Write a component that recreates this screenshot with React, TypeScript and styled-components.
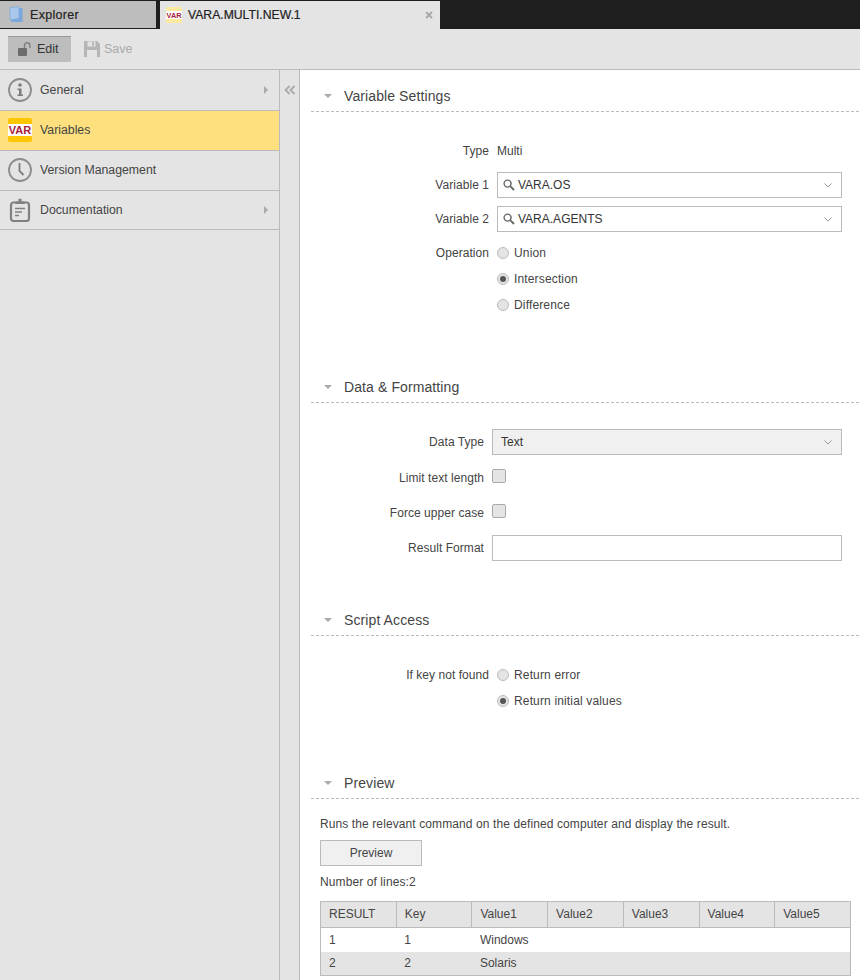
import React from "react";
import styled, { createGlobalStyle } from "styled-components";

const GlobalStyle = createGlobalStyle`
  html, body { margin: 0; padding: 0; height: 100%; background: #fff; }
  body { font-family: "Liberation Sans", Arial, sans-serif; font-size: 12px; color: #333; overflow: hidden; }
  #root { height: 100%; }
`;

const Page = styled.div`
  display: flex;
  flex-direction: column;
  height: 980px;
  width: 860px;
`;

const TabBar = styled.div`
  display: flex;
  flex: none;
  height: 29px;
  padding-top: 1px;
  box-sizing: border-box;
  background: #1e1e1e;
`;

const Tab = styled.div<{ $active?: boolean }>`
  display: flex;
  align-items: center;
  box-sizing: border-box;
  width: ${(p) => (p.$active ? "280px" : "156px")};
  height: ${(p) => (p.$active ? "28px" : "27px")};
  margin-left: ${(p) => (p.$active ? "4px" : "0")};
  padding-left: ${(p) => (p.$active ? "6px" : "9px")};
  gap: 6px;
  background: ${(p) => (p.$active ? "#e4e4e4" : "#bdbdbd")};
  color: #222;
  font-size: ${(p) => (p.$active ? "12.2px" : "12.5px")};
  letter-spacing: ${(p) => (p.$active ? "0" : "0.3px")};
  -webkit-text-stroke: 0.2px #222;
`;

const CloseMark = styled.svg`
  margin-left: auto;
  margin-right: 7px;
`;

const Toolbar = styled.div`
  display: flex;
  flex: none;
  align-items: center;
  gap: 4px;
  box-sizing: border-box;
  height: 41px;
  padding: 0 8px 1px;
  background: #e4e4e4;
  border-bottom: 1px solid #bbb;
`;

const ToolButton = styled.div<{ $pressed?: boolean }>`
  display: flex;
  align-items: center;
  box-sizing: border-box;
  gap: 4px;
  height: 26px;
  width: 63px;
  padding-left: 9px;
  background: ${(p) => (p.$pressed ? "#bdbdbd" : "transparent")};
  border-top: 1px solid ${(p) => (p.$pressed ? "#999" : "transparent")};
  color: ${(p) => (p.$pressed ? "#333" : "#aaa")};
  font-size: 12.5px;
`;

const Workspace = styled.div`
  display: flex;
  flex: 1;
  min-height: 0;
`;

const Sidebar = styled.nav`
  flex: none;
  width: 280px;
  box-sizing: border-box;
  background: #e4e4e4;
  border-right: 1px solid #bbb;
`;

const NavRow = styled.div<{ $active?: boolean; $h?: number }>`
  display: flex;
  align-items: center;
  box-sizing: border-box;
  height: ${(p) => p.$h ?? 40}px;
  padding: 0 11px ${(p) => (p.$h ? "0" : "1px")} 8px;
  gap: 8px;
  background: ${(p) => (p.$active ? "#fee17e" : "transparent")};
  border-bottom: 1px solid #bbb;
  color: #444;
  font-size: 12.3px;
`;

const NavArrow = styled.span`
  margin-left: auto;
  width: 0;
  height: 0;
  border-left: 4px solid #aaa;
  border-top: 4px solid transparent;
  border-bottom: 4px solid transparent;
`;

const Strip = styled.div`
  flex: none;
  width: 20px;
  box-sizing: border-box;
  padding: 14px 0 0 4px;
  background: #e4e4e4;
  border-right: 1px solid #bbb;
`;

const Main = styled.main`
  flex: 1;
  min-width: 0;
  padding-left: 11px;
  background: #fff;
`;

const Section = styled.section<{ $after: number }>`
  margin-bottom: ${(p) => p.$after}px;
`;

const SectionHead = styled.div`
  display: flex;
  align-items: center;
  box-sizing: border-box;
  height: 42px;
  padding: 11px 0 0 13px;
  gap: 12px;
  margin-right: 1px;
  border-bottom: 1px dashed #bbb;
`;

const Caret = styled.span`
  width: 0;
  height: 0;
  border-top: 4px solid #aaa;
  border-left: 4px solid transparent;
  border-right: 4px solid transparent;
`;

const SectionTitle = styled.h2`
  margin: 0;
  font-size: 14px;
  font-weight: normal;
  letter-spacing: 0.1px;
  color: #444;
`;

const FormBody = styled.div<{ $gap: number }>`
  display: flex;
  flex-direction: column;
  gap: ${(p) => p.$gap}px;
  padding: 26px 18px 0 0;
`;

const Row = styled.div`
  display: flex;
  align-items: center;
  height: 26px;
  gap: 8px;
`;

const LastRow = styled(Row)`
  margin-top: 1px;
`;

const Label = styled.div<{ $w: number }>`
  flex: none;
  width: ${(p) => p.$w}px;
  text-align: right;
  font-size: 12px;
  color: #444;
  letter-spacing: 0.05px;
`;

const CheckLabel = styled(Label)`
  margin-top: 2px;
`;

const StaticValue = styled.div`
  color: #444;
  font-size: 12px;
`;

const Field = styled.div<{ $filled?: boolean }>`
  display: flex;
  flex: 1;
  align-items: center;
  box-sizing: border-box;
  height: 26px;
  padding: 0 9px 0 ${(p) => (p.$filled ? "8px" : "5px")};
  gap: 3px;
  background: ${(p) => (p.$filled ? "#f0f0f0" : "#fff")};
  border: 1px solid #bbb;
  color: #333;
  font-size: 12px;
`;

const FieldChevron = styled.svg`
  margin-left: auto;
`;

const RadioIndent = styled.div`
  display: flex;
  flex-direction: column;
  padding-left: 186px;
`;

const RadioLine = styled.div`
  display: flex;
  align-items: center;
  height: 26px;
  gap: 5px;
  color: #444;
  font-size: 12px;
  letter-spacing: 0.15px;
`;

const RadioDot = styled.span<{ $on?: boolean }>`
  display: flex;
  align-items: center;
  justify-content: center;
  box-sizing: border-box;
  width: 12px;
  height: 12px;
  border-radius: 50%;
  border: 1px solid #bbb;
  background: #e4e4e4;

  &::after {
    content: "";
    display: ${(p) => (p.$on ? "block" : "none")};
    width: 6px;
    height: 6px;
    border-radius: 50%;
    background: #555;
  }
`;

const CheckBox = styled.span`
  box-sizing: border-box;
  width: 14px;
  height: 14px;
  margin-top: -2px;
  border-radius: 2px;
  border: 1px solid #aaa;
  background: #e4e4e4;
`;

const PreviewBody = styled.div`
  padding: 18px 8px 0 9px;
`;

const Hint = styled.p`
  margin: 0 0 9px;
  line-height: 14px;
  font-size: 12px;
  letter-spacing: 0.1px;
  color: #444;
`;

const PreviewButton = styled.button`
  display: block;
  width: 102px;
  height: 26px;
  padding: 0;
  background: #f0f0f0;
  border: 1px solid #bbb;
  color: #444;
  font: 12px "Liberation Sans", Arial, sans-serif;
`;

const LineCount = styled(Hint)`
  margin: 9px 0 12px;
`;

const ResultTable = styled.table`
  width: 531px;
  table-layout: fixed;
  border-collapse: collapse;
  border: 1px solid #bbb;
  font-size: 12px;
  color: #444;
`;

const HeadCell = styled.th`
  height: 26px;
  padding: 0 0 2px 8px;
  box-sizing: border-box;
  background: #e4e4e4;
  border: 1px solid #bbb;
  font-weight: normal;
  text-align: left;
`;

const BodyRow = styled.tr<{ $odd?: boolean }>`
  background: ${(p) => (p.$odd ? "#fff" : "#e4e4e4")};
`;

const BodyCell = styled.td`
  height: 24px;
  padding: 0 0 0 8px;
  box-sizing: border-box;
`;

const BookIcon = () => (
  <svg width="15" height="17" viewBox="0 0 15 17">
    <path d="M1 1.5 10 0.5V12.5L1 14Z" fill="#a9c8ec" stroke="#7ea6d6" strokeWidth="0.7" />
    <path d="M10 2H13.5V16H3L1 14 10 12.5Z" fill="#7aa8de" />
  </svg>
);

const VarIcon = ({ size, band, edge }: { size: number; band: string; edge: string }) => (
  <svg width={size} height={size} viewBox="0 0 24 24">
    <rect width="24" height="24" rx="2" fill={edge} />
    <rect y="6" width="24" height="12" fill={band} />
    <text
      x="12"
      y="16.4"
      textAnchor="middle"
      fontFamily="Liberation Sans, Arial, sans-serif"
      fontWeight="bold"
      fontSize="11"
      fill="#a8213b"
    >
      VAR
    </text>
  </svg>
);

const LockIcon = () => (
  <svg width="16" height="15" viewBox="0 0 16 15">
    <rect x="1" y="6" width="9" height="8" rx="1" fill="#6c6c6c" />
    <path d="M7.5 6V3.5a2.7 2.7 0 0 1 5.4 0V6" fill="none" stroke="#808080" strokeWidth="1.4" />
  </svg>
);

const SaveIcon = () => (
  <svg width="16" height="16" viewBox="0 0 16 16">
    <path d="M0 0H13L16 3V16H0Z" fill="#b5b5b5" />
    <rect x="3.5" y="0.5" width="8" height="5" fill="#e4e4e4" />
    <rect x="8" y="1.2" width="2" height="3.4" fill="#b5b5b5" />
    <rect x="3" y="9" width="10" height="7" fill="#e4e4e4" />
  </svg>
);

const InfoIcon = () => (
  <svg width="24" height="24" viewBox="0 0 24 24">
    <circle cx="12" cy="12" r="11" fill="none" stroke="#8c8c8c" strokeWidth="1.8" />
    <circle cx="12" cy="7" r="1.8" fill="#7c7c7c" />
    <path d="M9.5 10.5H13.5V16.5H15V18H9.5V16.5H11V12H9.5Z" fill="#7c7c7c" />
  </svg>
);

const ClockIcon = () => (
  <svg width="24" height="24" viewBox="0 0 24 24">
    <circle cx="12" cy="12" r="11" fill="none" stroke="#8c8c8c" strokeWidth="1.8" />
    <path d="M11.5 5V13L15.5 17" fill="none" stroke="#7c7c7c" strokeWidth="1.8" />
  </svg>
);

const ClipboardIcon = () => (
  <svg width="24" height="24" viewBox="0 0 24 24">
    <rect x="3" y="4.5" width="18" height="18.5" rx="2.5" fill="none" stroke="#808080" strokeWidth="2.2" />
    <path d="M7.5 6V3.5H10.5V0.8H13.5V3.5H16.5V6Z" fill="#808080" />
    <path d="M7 10.5H17M7 14H14M7 17.5H11" stroke="#808080" strokeWidth="1.6" />
  </svg>
);

const CollapseIcon = () => (
  <svg width="12" height="10" viewBox="0 0 12 10">
    <path d="M5.5 1 1.5 5 5.5 9M10.5 1 6.5 5 10.5 9" fill="none" stroke="#aaa" strokeWidth="1.8" />
  </svg>
);

const SearchIcon = () => (
  <svg width="12" height="12" viewBox="0 0 12 12">
    <circle cx="4.6" cy="4.6" r="3.5" fill="none" stroke="#666" strokeWidth="1.4" />
    <path d="M7.2 7.2 11 11" stroke="#666" strokeWidth="1.8" />
  </svg>
);

const Chevron = () => (
  <FieldChevron width="8" height="5" viewBox="0 0 8 5">
    <path d="M0.5 0.5 4 4 7.5 0.5" fill="none" stroke="#999" />
  </FieldChevron>
);

const columns = ["RESULT", "Key", "Value1", "Value2", "Value3", "Value4", "Value5"];

const rows = [
  ["1", "1", "Windows", "", "", "", ""],
  ["2", "2", "Solaris", "", "", "", ""],
];

const Head = ({ title }: { title: string }) => (
  <SectionHead>
    <Caret />
    <SectionTitle>{title}</SectionTitle>
  </SectionHead>
);

const Radio = ({ label, on }: { label: string; on?: boolean }) => (
  <RadioLine>
    <RadioDot $on={on} />
    {label}
  </RadioLine>
);

export default function App() {
  return (
    <Page>
      <GlobalStyle />
      <TabBar>
        <Tab>
          <BookIcon />
          Explorer
        </Tab>
        <Tab $active>
          <VarIcon size={16} band="#fff" edge="#fde9a0" />
          VARA.MULTI.NEW.1
          <CloseMark width="8" height="8" viewBox="0 0 8 8">
            <path d="M1 1 7 7M7 1 1 7" stroke="#aaa" strokeWidth="2" />
          </CloseMark>
        </Tab>
      </TabBar>
      <Toolbar>
        <ToolButton $pressed>
          <LockIcon />
          Edit
        </ToolButton>
        <ToolButton>
          <SaveIcon />
          Save
        </ToolButton>
      </Toolbar>
      <Workspace>
        <Sidebar>
          <NavRow $h={41}>
            <InfoIcon />
            General
            <NavArrow />
          </NavRow>
          <NavRow $active>
            <VarIcon size={24} band="#fff" edge="#fec600" />
            Variables
          </NavRow>
          <NavRow>
            <ClockIcon />
            Version Management
          </NavRow>
          <NavRow $h={39}>
            <ClipboardIcon />
            Documentation
            <NavArrow />
          </NavRow>
        </Sidebar>
        <Strip>
          <CollapseIcon />
        </Strip>
        <Main>
          <Section $after={43}>
            <Head title="Variable Settings" />
            <FormBody $gap={8}>
              <Row>
                <Label $w={178}>Type</Label>
                <StaticValue>Multi</StaticValue>
              </Row>
              <Row>
                <Label $w={178}>Variable 1</Label>
                <Field>
                  <SearchIcon />
                  VARA.OS
                  <Chevron />
                </Field>
              </Row>
              <Row>
                <Label $w={178}>Variable 2</Label>
                <Field>
                  <SearchIcon />
                  VARA.AGENTS
                  <Chevron />
                </Field>
              </Row>
              <Row>
                <Label $w={178}>Operation</Label>
                <Radio label="Union" />
              </Row>
            </FormBody>
            <RadioIndent>
              <Radio label="Intersection" on />
              <Radio label="Difference" />
            </RadioIndent>
          </Section>
          <Section $after={33}>
            <Head title="Data &amp; Formatting" />
            <FormBody $gap={9}>
              <Row>
                <Label $w={173}>Data Type</Label>
                <Field $filled>
                  Text
                  <Chevron />
                </Field>
              </Row>
              <Row>
                <CheckLabel $w={173}>Limit text length</CheckLabel>
                <CheckBox />
              </Row>
              <Row>
                <CheckLabel $w={173}>Force upper case</CheckLabel>
                <CheckBox />
              </Row>
              <LastRow>
                <Label $w={173}>Result Format</Label>
                <Field />
              </LastRow>
            </FormBody>
          </Section>
          <Section $after={43}>
            <Head title="Script Access" />
            <FormBody $gap={0}>
              <Row>
                <Label $w={178}>If key not found</Label>
                <Radio label="Return error" />
              </Row>
            </FormBody>
            <RadioIndent>
              <Radio label="Return initial values" on />
            </RadioIndent>
          </Section>
          <Section $after={0}>
            <Head title="Preview" />
            <PreviewBody>
              <Hint>Runs the relevant command on the defined computer and display the result.</Hint>
              <PreviewButton>Preview</PreviewButton>
              <LineCount>Number of lines:2</LineCount>
              <ResultTable>
                <thead>
                  <tr>
                    {columns.map((c) => (
                      <HeadCell key={c}>{c}</HeadCell>
                    ))}
                  </tr>
                </thead>
                <tbody>
                  {rows.map((r, i) => (
                    <BodyRow key={i} $odd={i % 2 === 0}>
                      {r.map((v, j) => (
                        <BodyCell key={j}>{v}</BodyCell>
                      ))}
                    </BodyRow>
                  ))}
                </tbody>
              </ResultTable>
            </PreviewBody>
          </Section>
        </Main>
      </Workspace>
    </Page>
  );
}
